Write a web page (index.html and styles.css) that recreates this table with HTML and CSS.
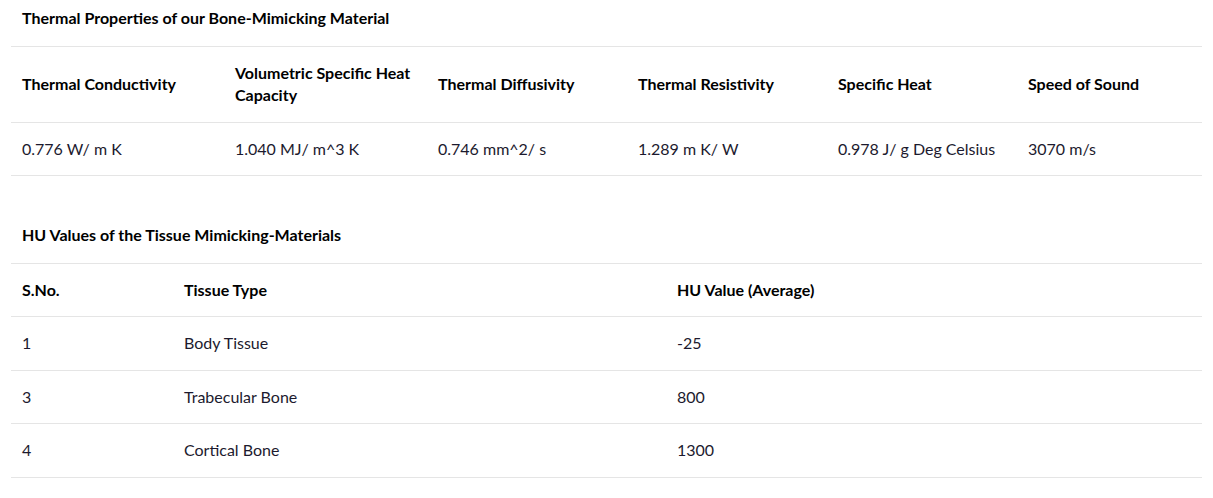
FILE: index.html
```html
<!DOCTYPE html>
<html lang="en">
<head>
  <meta charset="UTF-8" />
  <meta name="viewport" content="width=device-width, initial-scale=1.0"/>
  <title>Material Properties</title>
  <link rel="stylesheet" href="styles.css">
</head>
<body>
  <div class="content">

    <section class="table-block">
      <h3 class="table-title">Thermal Properties of our Bone-Mimicking Material</h3>
      <table class="data-table">
        <colgroup>
          <col class="c-213">
          <col class="c-203">
          <col class="c-200">
          <col class="c-200">
          <col class="c-190">
          <col>
        </colgroup>
        <thead>
          <tr>
            <th>Thermal Conductivity</th>
            <th>Volumetric Specific Heat Capacity</th>
            <th>Thermal Diffusivity</th>
            <th>Thermal Resistivity</th>
            <th>Specific Heat</th>
            <th>Speed of Sound</th>
          </tr>
        </thead>
        <tbody>
          <tr>
            <td>0.776 W/ m K</td>
            <td>1.040 MJ/ m^3 K</td>
            <td>0.746 mm^2/ s</td>
            <td>1.289 m K/ W</td>
            <td>0.978 J/ g Deg Celsius</td>
            <td>3070 m/s</td>
          </tr>
        </tbody>
      </table>
    </section>

    <section class="table-block second">
      <h3 class="table-title">HU Values of the Tissue Mimicking-Materials</h3>
      <table class="data-table">
        <colgroup>
          <col class="c-162">
          <col class="c-493">
          <col>
        </colgroup>
        <thead>
          <tr>
            <th>S.No.</th>
            <th>Tissue Type</th>
            <th>HU Value (Average)</th>
          </tr>
        </thead>
        <tbody>
          <tr>
            <td>1</td>
            <td>Body Tissue</td>
            <td>-25</td>
          </tr>
          <tr>
            <td>3</td>
            <td>Trabecular Bone</td>
            <td>800</td>
          </tr>
          <tr>
            <td>4</td>
            <td>Cortical Bone</td>
            <td>1300</td>
          </tr>
        </tbody>
      </table>
    </section>

  </div>
</body>
</html>
```

FILE: styles.css
```css
body {
  margin: 0;
  font-family: Lato, 'Noto Sans', sans-serif;
  font-size: 16px;
  line-height: 22.5px;
  color: #1c1a2e;
  background-color: #fff;
}

.content {
  padding: 0 11px;
}

.table-block.second {
  margin-top: 41px;
}

.table-title {
  margin: 0;
  padding: 7px 11px 16px;
  font-size: 16px;
  font-weight: 700;
  color: #000;
  border-bottom: 1px solid #e5e5e5;
}

.data-table {
  width: 100%;
  border-collapse: collapse;
  table-layout: fixed;
}

.data-table th,
.data-table td {
  padding: 15px 11px;
  text-align: left;
  vertical-align: middle;
  border-bottom: 1px solid #e5e5e5;
}

.data-table th {
  font-weight: 700;
  color: #000;
}

.c-213 { width: 213px; }
.c-203 { width: 203px; }
.c-200 { width: 200px; }
.c-190 { width: 190px; }
.c-162 { width: 162px; }
.c-493 { width: 493px; }
```
